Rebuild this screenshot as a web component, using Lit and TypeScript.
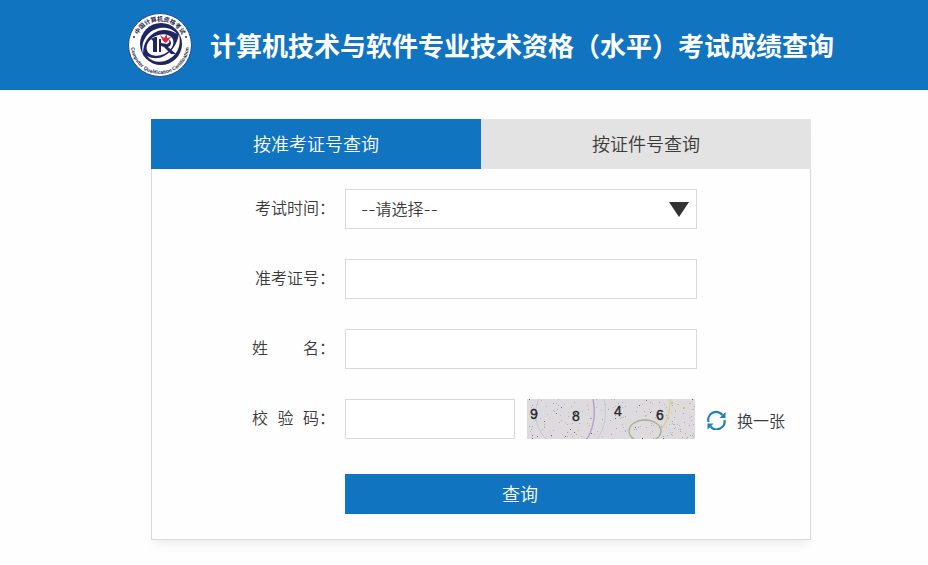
import { LitElement, html, svg, css } from "lit";
import { customElement, state } from "lit/decorators.js";
import { classMap } from "lit/directives/class-map.js";

const BLUE = css`#1074c1`;

@customElement("exam-logo")
class ExamLogo extends LitElement {
  static styles = css`
    :host { display: block; flex: none; width: 64px; height: 64px; }
    svg { display: block; width: 100%; height: 100%; }
    .ring { font: 700 5px "Liberation Sans", sans-serif; fill: #26284f; }
    .cn { font: 700 6px "Noto Sans CJK SC", sans-serif; }
  `;
  render() {
    return html`
      <svg viewBox="0 0 64 64" role="img" aria-label="中国计算机资格考试">
        <defs>
          <path id="top" d="M8 32a24 24 0 0 1 48 0" />
          <path id="bottom" d="M3 32a29 29 0 0 0 58 0" />
        </defs>
        <circle cx="32" cy="32" r="31.5" fill="#fff" stroke="#1c4f8c" stroke-width="1" />
        <circle cx="33" cy="31" r="21" fill="#1e2560" />
        <path d="M15 41C12 28 20 17 32 15c8-1 14 2 17 6-6-4-13-5-19-3-10 4-15 12-15 23z" fill="#fff" />
        <path d="M51 21c3 13-3 23-14 27-8 2-14 0-18-5 6 3 12 3 17 0 8-4 13-12 15-22z" fill="#fff" />
        <ellipse cx="32" cy="32" rx="14" ry="10" fill="#fff" transform="rotate(-25 32 32)" />
        <path d="M23 26l4-2h2v15h-4V28z" fill="#1e2560" />
        <path d="M31 26h2v4l6 1c3-1 3-3 1-5 4 2 4 6 0 8l8 7h-5l-7-7-3-1v6h-2z" fill="#1e2560" />
        <path d="M32 22l4 3 3-4v4l4-1-5 6-3-2z" fill="#d8283c" />
        <text class="ring cn"><textPath href="#top" startOffset="50%" text-anchor="middle">中国计算机资格考试</textPath></text>
        <text class="ring"><textPath href="#bottom" startOffset="50%" text-anchor="middle">Computer Qualification Certification</textPath></text>
        <circle cx="6" cy="24" r="1" fill="#26284f" />
        <circle cx="58" cy="24" r="1" fill="#26284f" />
      </svg>
    `;
  }
}

const SPECK_COLOURS = ["#aaa6b8", "#c4b68e", "#b0bfa6", "#c9acc6", "#9aa4c6", "#6b6978"];

function specks(seed: number, count: number) {
  let s = seed;
  const next = () => (s = (s * 16807) % 2147483647) / 2147483647;
  return Array.from({ length: count }, () => ({
    x: Math.floor(next() * 168),
    y: Math.floor(next() * 40),
    colour: SPECK_COLOURS[Math.floor(next() * SPECK_COLOURS.length)],
  }));
}

@customElement("captcha-picture")
class CaptchaPicture extends LitElement {
  static styles = css`
    :host { display: block; flex: none; width: 168px; height: 40px; }
    svg { display: block; width: 100%; height: 100%; }
    text { font: 14px "Liberation Sans", sans-serif; fill: #24222a; stroke: #24222a; stroke-width: .3; }
  `;
  private digits = [
    { c: "9", x: 3, y: 20 },
    { c: "8", x: 45, y: 22 },
    { c: "4", x: 87, y: 17 },
    { c: "6", x: 129, y: 21 },
  ];
  render() {
    return html`
      <svg viewBox="0 0 168 40" role="img" aria-label="校验码">
        <rect width="168" height="40" fill="#dddbdd" />
        ${specks(4211, 190).map(
          (p) => svg`<rect x=${p.x} y=${p.y} width="1" height="1" fill=${p.colour} />`
        )}
        <g fill="#d9bd62">
          <rect x="144" y="3" width="2" height="2" /><rect x="150" y="5" width="2" height="1" />
          <rect x="156" y="8" width="2" height="2" /><rect x="162" y="4" width="2" height="1" />
          <rect x="148" y="11" width="1" height="2" /><rect x="165" y="10" width="2" height="1" />
        </g>
        <g fill="none">
          <path d="M12 0C6 12 8 28 19 40" stroke="#c9c3d8" />
          <path d="M66 0C69 16 66 30 60 40" stroke="#b6a3cb" stroke-width="1.4" />
          <path d="M77 0C80 14 79 28 70 40" stroke="#cbc6d8" />
          <path d="M143 0c0 12-3 24-9 30" stroke="#dccb9a" stroke-width="1.4" />
          <ellipse cx="118" cy="32" rx="16" ry="11" stroke="#a5b294" stroke-width="1.4" />
        </g>
        ${this.digits.map((d) => svg`<text x=${d.x} y=${d.y}>${d.c}</text>`)}
      </svg>
    `;
  }
}

@customElement("app-root")
class AppRoot extends LitElement {
  static styles = css`
    :host {
      display: block;
      min-height: 100vh;
      background: #fefefe;
      color: #3a3a3a;
      font: 350 16px/24px "Noto Sans CJK SC", sans-serif;
    }
    * { box-sizing: border-box; }
    button, input, select { font: inherit; color: inherit; margin: 0; border-radius: 0; }
    button { border: 0; padding: 0; cursor: pointer; }
    header {
      display: flex;
      align-items: center;
      justify-content: center;
      gap: 18px;
      min-height: 90px;
      padding-left: 34px;
      background: ${BLUE};
      color: #fff;
    }
    h1 { margin: 0; font-size: 26px; line-height: 40px; font-weight: 700; }
    main { padding: 29px 0 24px 34px; }
    .card { max-width: 660px; margin: 0 auto; box-shadow: 0 8px 10px -4px #00000014; }
    .tabs { display: flex; }
    .tab { flex: 1; height: 50px; padding-bottom: 2px; font-size: 18px; background: #e3e3e3; }
    .tab.active { background: ${BLUE}; color: #fff; }
    form {
      display: grid;
      gap: 30px;
      padding: 20px 24px 25px 0;
      border: 1px solid #d9d9d9;
      border-top: 0;
      background: #fefefe;
    }
    .row { display: flex; gap: 10px; }
    .label { display: flex; flex: none; justify-content: flex-end; width: 183px; line-height: 36px; }
    .spread { display: flex; justify-content: space-between; width: 67px; }
    .field { flex: 0 1 352px; min-width: 0; height: 40px; border: 1px solid #d9d9d9; background: #fff; }
    input.field { padding: 0 15px; }
    .short { flex-basis: 170px; }
    .picker { display: grid; align-items: center; }
    .picker > * { grid-area: 1 / 1; }
    select {
      appearance: none;
      width: 100%;
      height: 38px;
      padding: 0 40px 0 15px;
      border: 0;
      background: none;
      font-family: Inter, "Noto Sans CJK SC", sans-serif;
    }
    .arrow { justify-self: end; width: 20px; height: 15px; margin-right: 7px; fill: #333; pointer-events: none; }
    .code { display: flex; gap: 12px; height: 40px; }
    .refresh { display: flex; align-items: center; gap: 10px; padding-top: 2px; background: none; }
    .refresh svg { width: 20px; height: 20px; }
    .submit { flex: 0 1 350px; height: 40px; margin: 5px 0 0 193px; padding-bottom: 2px; background: ${BLUE}; color: #fff; font-size: 18px; }
  `;

  @state() private tab = 0;

  render() {
    return html`
      <header>
        <exam-logo></exam-logo>
        <h1>计算机技术与软件专业技术资格（水平）考试成绩查询</h1>
      </header>
      <main>
        <div class="card">
          <div class="tabs" role="tablist">
            ${["按准考证号查询", "按证件号查询"].map(
              (name, i) => html`<button
                role="tab"
                class=${classMap({ tab: true, active: this.tab === i })}
                aria-selected=${this.tab === i}
                @click=${() => (this.tab = i)}
              >${name}</button>`
            )}
          </div>
          <form @submit=${(e: Event) => e.preventDefault()}>
            <div class="row">
              <label class="label" for="time">考试时间：</label>
              <div class="field picker">
                <select id="time"><option>--请选择--</option></select>
                <svg class="arrow" viewBox="0 0 20 15" aria-hidden="true"><path d="M0 0h20L10 15z" /></svg>
              </div>
            </div>
            <div class="row">
              <label class="label" for="ticket">准考证号：</label>
              <input class="field" id="ticket" type="text" />
            </div>
            <div class="row">
              <label class="label" for="name"><span class="spread"><span>姓</span><span>名</span></span>：</label>
              <input class="field" id="name" type="text" />
            </div>
            <div class="row">
              <label class="label" for="code"><span class="spread"><span>校</span><span>验</span><span>码</span></span>：</label>
              <div class="code">
                <input class="field short" id="code" type="text" />
                <captcha-picture></captcha-picture>
                <button class="refresh" type="button">
                  <svg viewBox="0 0 20 20" aria-hidden="true">
                    <g fill="none" stroke="#2280b8" stroke-width="2.2">
                      <path d="M1.500 12A8 8 0 0 1 15.500 5" />
                      <path d="M17.500 10A8 8 0 0 1 3.500 16.500" />
                    </g>
                    <path d="M18.500 2v6h-6zM.5 19.500v-6h6z" fill="#2280b8" />
                  </svg>
                  <span>换一张</span>
                </button>
              </div>
            </div>
            <div class="row"><button class="submit" type="submit">查询</button></div>
          </form>
        </div>
      </main>
    `;
  }
}
